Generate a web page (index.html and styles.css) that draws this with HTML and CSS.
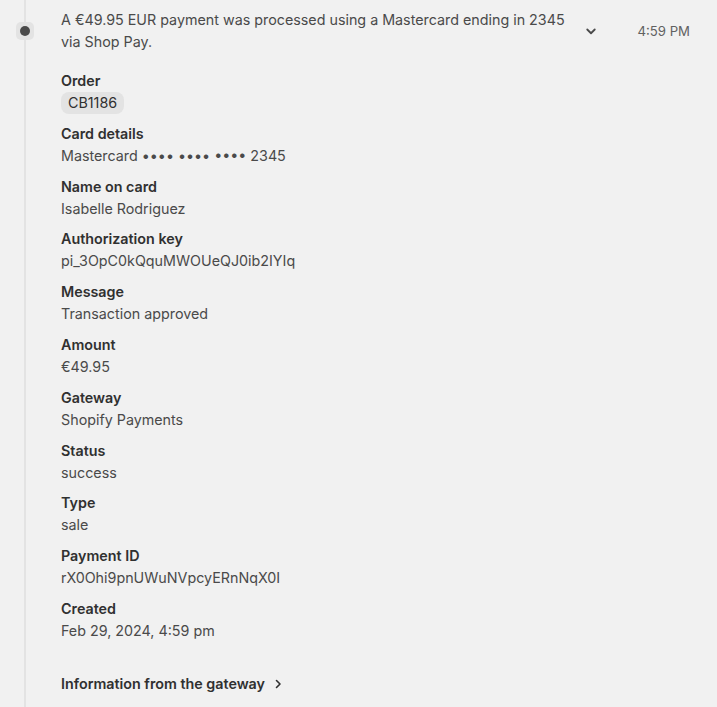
FILE: index.html
```html
<!DOCTYPE html>
<html lang="en">
<head>
<meta charset="utf-8">
<title>Payment event</title>
<link rel="stylesheet" href="styles.css">
</head>
<body>
<div class="timeline">
  <div class="event-head">
    <span class="marker"><span class="marker-dot"></span></span>
    <p class="event-text">A €49.95 EUR payment was processed using a Mastercard ending in 2345 via Shop Pay.</p>
    <span class="chevron">
      <svg width="16" height="16" viewBox="0 0 16 16"><path d="M4.25 6.5 8 10.25l3.75-3.75" fill="none" stroke="#4a4a4a" stroke-width="1.8" stroke-linecap="round" stroke-linejoin="round"/></svg>
    </span>
    <span class="event-time">4:59 PM</span>
  </div>
  <dl class="details">
    <div class="item"><dt>Order</dt><dd><span class="badge">CB1186</span></dd></div>
    <div class="item"><dt>Card details</dt><dd>Mastercard •••• •••• •••• 2345</dd></div>
    <div class="item"><dt>Name on card</dt><dd>Isabelle Rodriguez</dd></div>
    <div class="item"><dt>Authorization key</dt><dd>pi_3OpC0kQquMWOUeQJ0ib2IYIq</dd></div>
    <div class="item"><dt>Message</dt><dd>Transaction approved</dd></div>
    <div class="item"><dt>Amount</dt><dd>€49.95</dd></div>
    <div class="item"><dt>Gateway</dt><dd>Shopify Payments</dd></div>
    <div class="item"><dt>Status</dt><dd>success</dd></div>
    <div class="item"><dt>Type</dt><dd>sale</dd></div>
    <div class="item"><dt>Payment ID</dt><dd>rX0Ohi9pnUWuNVpcyERnNqX0I</dd></div>
    <div class="item"><dt>Created</dt><dd>Feb 29, 2024, 4:59 pm</dd></div>
  </dl>
  <a class="gateway-link" href="#">Information from the gateway
    <svg width="12" height="12" viewBox="0 0 12 12"><path d="M4.5 2.5 8 6l-3.5 3.5" fill="none" stroke="#303030" stroke-width="1.6" stroke-linecap="round" stroke-linejoin="round"/></svg>
  </a>
</div>
</body>
</html>
```

FILE: styles.css
```css
html, body {
  margin: 0;
  padding: 0;
  background: #f1f1f1;
}
body {
  font-family: Inter, "Noto Sans", sans-serif;
  font-size: 14.3px;
  color: #4a4a4a;
  height: 707px;
  overflow: hidden;
}
.timeline {
  margin-left: 24px;
  border-left: 2px solid #e3e3e3;
  min-height: 707px;
  padding-top: 9px;
}
.event-head {
  display: flex;
  align-items: center;
  padding-right: 27px;
}
.marker {
  flex: none;
  width: 18px;
  height: 18px;
  margin-left: -10px;
  border-radius: 5px;
  background: #e3e3e3;
  display: flex;
  align-items: center;
  justify-content: center;
}
.marker-dot {
  width: 10px;
  height: 10px;
  border-radius: 50%;
  background: #4a4a4a;
}
.event-text {
  flex: 1;
  margin: 0 9px 0 27px;
  line-height: 22px;
  color: #4a4a4a;
}
.chevron {
  flex: none;
  width: 20px;
  height: 20px;
  display: flex;
  align-items: center;
  justify-content: center;
}
.event-time {
  flex: none;
  margin-left: 36px;
  font-size: 13.2px;
  color: #616161;
  line-height: 20px;
}
.details {
  margin: 17px 0 0;
  padding-left: 35px;
  display: flex;
  flex-direction: column;
  gap: 8.8px;
}
.item {
  display: flex;
  flex-direction: column;
}
dt {
  font-weight: 600;
  color: #303030;
  line-height: 22px;
}
dd {
  margin: 0;
  line-height: 22px;
  color: #4a4a4a;
}
.badge {
  display: inline-block;
  padding: 0 7px;
  border-radius: 8px;
  background: #e3e3e3;
  color: #303030;
}
.gateway-link {
  display: inline-flex;
  align-items: center;
  gap: 7px;
  margin: 31px 0 0 35px;
  font-weight: 600;
  color: #303030;
  text-decoration: none;
  line-height: 22px;
}
```
